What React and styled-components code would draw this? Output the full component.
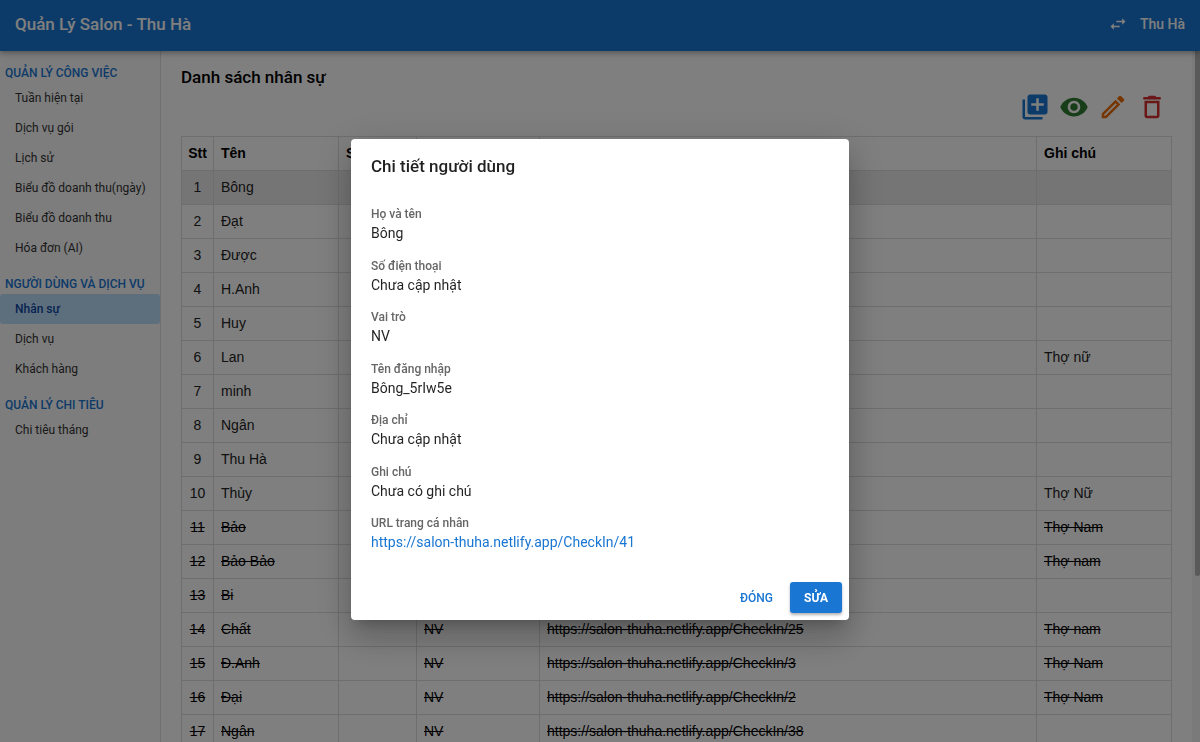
import styled, { createGlobalStyle } from "styled-components";
import {
  MdDeleteOutline,
  MdLibraryAdd,
  MdOutlineModeEdit,
  MdSwapHoriz,
  MdVisibility,
} from "react-icons/md";

const BASE_URL = "https://salon-thuha.netlify.app/CheckIn/";

const menu = [
  {
    title: "QUẢN LÝ CÔNG VIỆC",
    items: [
      "Tuần hiện tại",
      "Dịch vụ gói",
      "Lịch sử",
      "Biểu đồ doanh thu(ngày)",
      "Biểu đồ doanh thu",
      "Hóa đơn (AI)",
    ],
  },
  {
    title: "NGƯỜI DÙNG VÀ DỊCH VỤ",
    items: ["Nhân sự", "Dịch vụ", "Khách hàng"],
  },
  { title: "QUẢN LÝ CHI TIÊU", items: ["Chi tiêu tháng"] },
];

const staff = [
  { name: "Bông" },
  { name: "Đạt" },
  { name: "Được" },
  { name: "H.Anh" },
  { name: "Huy" },
  { name: "Lan", note: "Thợ nữ" },
  { name: "minh" },
  { name: "Ngân" },
  { name: "Thu Hà" },
  { name: "Thủy", note: "Thợ Nữ" },
  { name: "Bảo", note: "Thợ Nam", off: true },
  { name: "Bảo Bảo", note: "Thợ nam", off: true },
  { name: "Bi", off: true },
  { name: "Chất", role: "NV", id: 25, note: "Thợ nam", off: true },
  { name: "Đ.Anh", role: "NV", id: 3, note: "Thợ Nam", off: true },
  { name: "Đại", role: "NV", id: 2, note: "Thợ Nam", off: true },
  { name: "Ngân", role: "NV", id: 38, off: true },
];

const details = [
  { label: "Họ và tên", value: "Bông" },
  { label: "Số điện thoại", value: "Chưa cập nhật" },
  { label: "Vai trò", value: "NV" },
  { label: "Tên đăng nhập", value: "Bông_5rIw5e" },
  { label: "Địa chỉ", value: "Chưa cập nhật" },
  { label: "Ghi chú", value: "Chưa có ghi chú" },
  { label: "URL trang cá nhân", link: BASE_URL + 41 },
];

const App = () => {
  return (
    <>
      <GlobalStyle />
      <Page>
        <Header>
          <Brand>Quản Lý Salon - Thu Hà</Brand>
          <Account>
            <IconButton aria-label="Đổi tài khoản">
              <MdSwapHoriz size={20} />
            </IconButton>
            <span>Thu Hà</span>
          </Account>
        </Header>
        <Body>
          <Sidebar>
            {menu.map((group) => (
              <MenuGroup key={group.title}>
                <MenuTitle>{group.title}</MenuTitle>
                {group.items.map((item) => (
                  <MenuLink href="#" key={item} $active={item === "Nhân sự"}>
                    {item}
                  </MenuLink>
                ))}
              </MenuGroup>
            ))}
          </Sidebar>
          <Main>
            <h1>Danh sách nhân sự</h1>
            <Toolbar>
              <IconButton $color="#1976d2" aria-label="Thêm">
                <MdLibraryAdd size={30} />
              </IconButton>
              <IconButton $color="#2e7d32" aria-label="Xem">
                <MdVisibility size={30} />
              </IconButton>
              <IconButton $color="#ed6c02" aria-label="Sửa">
                <MdOutlineModeEdit size={30} />
              </IconButton>
              <IconButton $color="#d32f2f" aria-label="Xóa">
                <MdDeleteOutline size={30} />
              </IconButton>
            </Toolbar>
            <StaffTable>
              <colgroup>
                <Col $width={32} />
                <Col $width={125} />
                <Col $width={78} />
                <Col $width={123} />
                <col />
                <Col $width={135} />
              </colgroup>
              <thead>
                <tr>
                  <th>Stt</th>
                  <th>Tên</th>
                  <th>SĐT</th>
                  <th></th>
                  <th></th>
                  <th>Ghi chú</th>
                </tr>
              </thead>
              <tbody>
                {staff.map((person, index) => (
                  <StaffRow key={index} $selected={index === 0} $off={person.off}>
                    <td>{index + 1}</td>
                    <td>{person.name}</td>
                    <td></td>
                    <td>{person.role}</td>
                    <td>{person.id && BASE_URL + person.id}</td>
                    <td>{person.note}</td>
                  </StaffRow>
                ))}
              </tbody>
            </StaffTable>
          </Main>
          <ScrollTrack>
            <ScrollThumb />
          </ScrollTrack>
        </Body>
      </Page>
      <Backdrop>
        <Dialog role="dialog" aria-labelledby="dialog-title">
          <h2 id="dialog-title">Chi tiết người dùng</h2>
          <Details>
            {details.map(({ label, value, link }) => (
              <div key={label}>
                <dt>{label}</dt>
                <dd>{link ? <a href={link}>{link}</a> : value}</dd>
              </div>
            ))}
          </Details>
          <Actions>
            <DialogButton>ĐÓNG</DialogButton>
            <DialogButton $primary>SỬA</DialogButton>
          </Actions>
        </Dialog>
      </Backdrop>
    </>
  );
};

const GlobalStyle = createGlobalStyle`
  * {
    margin: 0;
    padding: 0;
    box-sizing: border-box;
  }
  body {
    font-family: Roboto, "Liberation Sans", sans-serif;
    color: rgba(0, 0, 0, 0.87);
    overflow: hidden;
  }
  button {
    border: none;
    background: none;
    font-family: inherit;
    cursor: pointer;
  }
  a {
    text-decoration: none;
  }
`;

const Page = styled.div`
  height: 100vh;
  display: flex;
  flex-direction: column;
  overflow: hidden;
`;

const Header = styled.header`
  position: relative;
  flex: none;
  height: 51px;
  padding: 0 15px 3px;
  display: flex;
  align-items: center;
  justify-content: space-between;
  background: #1976d2;
  color: white;
  box-shadow: 0 2px 4px rgba(0, 0, 0, 0.2), 0 3px 8px rgba(0, 0, 0, 0.14);
`;

const Brand = styled.div`
  font-size: 17px;
  font-weight: 500;
`;

const Account = styled.div`
  display: flex;
  align-items: center;
  gap: 12px;
  font-size: 14px;
  font-weight: 500;
`;

const IconButton = styled.button`
  display: flex;
  color: ${({ $color }) => $color || "inherit"};
`;

const Body = styled.div`
  flex: 1;
  min-height: 0;
  display: flex;
`;

const Sidebar = styled.nav`
  flex: none;
  width: 161px;
  padding-top: 12px;
  border-right: 1px solid #e0e0e0;
  background: #fafafa;
`;

const MenuGroup = styled.div`
  margin-bottom: 11px;
`;

const MenuTitle = styled.div`
  padding: 0 5px;
  font-size: 12px;
  line-height: 20px;
  font-weight: 500;
  white-space: nowrap;
  color: #1976d2;
`;

const MenuLink = styled.a`
  display: block;
  padding: 0 15px;
  border-radius: 3px;
  font-size: 12px;
  line-height: 30px;
  white-space: nowrap;
  font-weight: ${({ $active }) => ($active ? 500 : 400)};
  color: ${({ $active }) => ($active ? "#0d47a1" : "#333")};
  background: ${({ $active }) => ($active ? "#bbdefb" : "none")};
`;

const Main = styled.main`
  flex: 1;
  min-width: 0;
  padding: 14px 20px 0;
  overflow: hidden;
  h1 {
    font-size: 17px;
    line-height: 25px;
    font-weight: 500;
    color: black;
  }
`;

const Toolbar = styled.div`
  display: flex;
  justify-content: flex-end;
  gap: 9px;
  padding: 2px 5px 14px 0;
`;

const StaffTable = styled.table`
  width: 100%;
  table-layout: fixed;
  border-collapse: collapse;
  font-family: "Liberation Sans", Arial, sans-serif;
  font-size: 14px;
  line-height: 17px;
  color: black;
  th,
  td {
    height: 34px;
    padding: 0 7px;
    border: 1px solid #ddd;
    text-align: left;
    white-space: nowrap;
  }
  td:first-child,
  th:first-child {
    padding: 0;
    text-align: center;
  }
`;

const Col = styled.col`
  width: ${({ $width }) => $width}px;
`;

const StaffRow = styled.tr`
  background: ${({ $selected }) => ($selected ? "#ebebeb" : "none")};
  text-decoration: ${({ $off }) => ($off ? "line-through" : "none")};
  color: ${({ $off }) => ($off ? "black" : "#222")};
`;

const ScrollTrack = styled.div`
  flex: none;
  width: 8px;
  padding-left: 3px;
  background: #f5f5f5;
`;

const ScrollThumb = styled.div`
  height: 76%;
  border-radius: 0 0 3px 3px;
  background: #b4b4b4;
`;

const Backdrop = styled.div`
  position: fixed;
  inset: 0;
  display: flex;
  align-items: center;
  justify-content: center;
  padding-top: 17px;
  background: rgba(0, 0, 0, 0.5);
`;

const Dialog = styled.div`
  display: flex;
  flex-direction: column;
  width: 498px;
  min-height: 481px;
  border-radius: 4px;
  background: white;
  box-shadow: 0 9px 12px -6px rgba(0, 0, 0, 0.2),
    0 20px 32px 2px rgba(0, 0, 0, 0.14), 0 8px 38px 6px rgba(0, 0, 0, 0.12);
  h2 {
    padding: 14px 20px;
    font-size: 17px;
    line-height: 26px;
    font-weight: 500;
  }
`;

const Details = styled.dl`
  flex: 1;
  padding: 12px 20px 22px;
  display: flex;
  flex-direction: column;
  justify-content: space-between;
  gap: 12px;
  dt {
    font-size: 12px;
    line-height: 18px;
    font-weight: 500;
    color: #666;
  }
  dd {
    font-size: 14px;
    line-height: 21px;
  }
  a {
    color: #1976d2;
  }
`;

const Actions = styled.div`
  display: flex;
  justify-content: flex-end;
  gap: 7px;
  padding: 7px;
`;

const DialogButton = styled.button`
  height: 31px;
  padding: ${({ $primary }) => ($primary ? "0 14px" : "0 10px")};
  border-radius: 3px;
  font-size: 12px;
  font-weight: ${({ $primary }) => ($primary ? 700 : 500)};
  color: ${({ $primary }) => ($primary ? "white" : "#1976d2")};
  background: ${({ $primary }) => ($primary ? "#1976d2" : "none")};
  box-shadow: ${({ $primary }) =>
    $primary ? "0 2px 3px rgba(0, 0, 0, 0.3)" : "none"};
`;

export default App;
